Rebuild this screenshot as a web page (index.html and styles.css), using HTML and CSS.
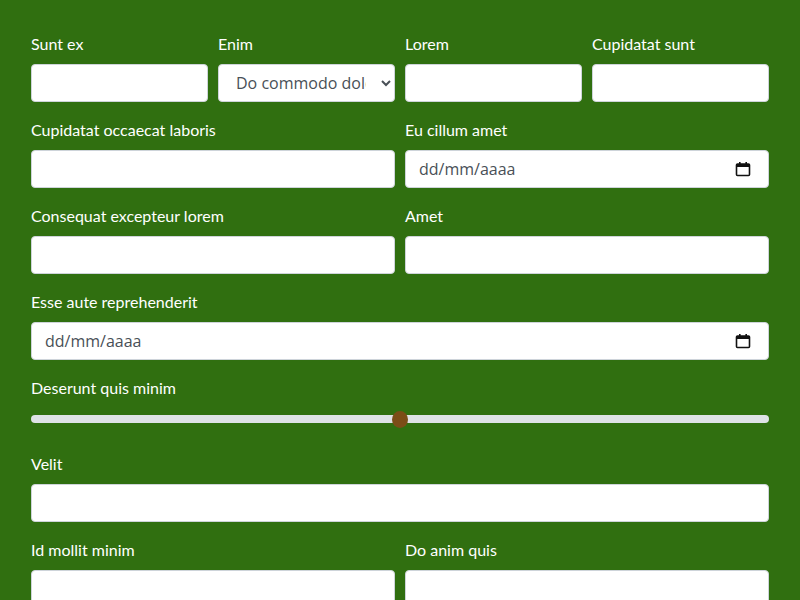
FILE: index.html
```
<!DOCTYPE html>
<html lang="es">
<head>
<meta charset="utf-8">
<link rel="stylesheet" href="styles.css">
</head>
<body>
<form class="form">
  <div class="row cols-4">
    <div class="field"><label class="lbl">Sunt ex</label><input class="control" type="text"></div>
    <div class="field"><label class="lbl">Enim</label>
      <select class="control select"><option>Do commodo dolor sint</option></select></div>
    <div class="field"><label class="lbl">Lorem</label><input class="control" type="text"></div>
    <div class="field"><label class="lbl">Cupidatat sunt</label><input class="control" type="text"></div>
  </div>
  <div class="row cols-2">
    <div class="field"><label class="lbl">Cupidatat occaecat laboris</label><input class="control" type="text"></div>
    <div class="field"><label class="lbl">Eu cillum amet</label>
      <div class="control date"><span class="date-text">dd/mm/aaaa</span>
        <svg class="cal" width="16" height="16" viewBox="0 0 16 16"><rect x="1.5" y="3" width="13" height="11.5" rx="1" fill="none" stroke="#111" stroke-width="1.6"/><rect x="1.5" y="3" width="13" height="3" fill="#111"/><rect x="4" y="1" width="1.6" height="3" fill="#111"/><rect x="10.4" y="1" width="1.6" height="3" fill="#111"/></svg>
      </div></div>
  </div>
  <div class="row cols-2">
    <div class="field"><label class="lbl">Consequat excepteur lorem</label><input class="control" type="text"></div>
    <div class="field"><label class="lbl">Amet</label><input class="control" type="text"></div>
  </div>
  <div class="row">
    <div class="field"><label class="lbl">Esse aute reprehenderit</label>
      <div class="control date"><span class="date-text">dd/mm/aaaa</span>
        <svg class="cal" width="16" height="16" viewBox="0 0 16 16"><rect x="1.5" y="3" width="13" height="11.5" rx="1" fill="none" stroke="#111" stroke-width="1.6"/><rect x="1.5" y="3" width="13" height="3" fill="#111"/><rect x="4" y="1" width="1.6" height="3" fill="#111"/><rect x="10.4" y="1" width="1.6" height="3" fill="#111"/></svg>
      </div></div>
  </div>
  <div class="row">
    <div class="field"><label class="lbl">Deserunt quis minim</label>
      <input class="range" type="range" min="0" max="100" value="50"></div>
  </div>
  <div class="row">
    <div class="field"><label class="lbl">Velit</label><input class="control" type="text"></div>
  </div>
  <div class="row cols-2">
    <div class="field"><label class="lbl">Id mollit minim</label><input class="control" type="text"></div>
    <div class="field"><label class="lbl">Do anim quis</label><input class="control" type="text"></div>
  </div>
</form>
</body>
</html>
```
FILE: styles.css
```
html, body {
  margin: 0;
  padding: 0;
  background: #306f10;
}
body {
  font-family: "Lato", "Open Sans", sans-serif;
}
.form {
  padding: 32px 31px;
  display: flex;
  flex-direction: column;
  gap: 16px;
}
.row {
  display: grid;
  grid-template-columns: 1fr;
  gap: 10px;
}
.row.cols-4 { grid-template-columns: repeat(4, 1fr); }
.row.cols-2 { grid-template-columns: repeat(2, 1fr); }
.field {
  display: flex;
  flex-direction: column;
  min-width: 0;
}
.lbl {
  color: #ffffff;
  font-size: 16px;
  line-height: 24px;
  margin-bottom: 8px;
}
.control {
  box-sizing: border-box;
  height: 38px;
  width: 100%;
  background: #fff;
  border: 1px solid #ced4da;
  border-radius: 4px;
  padding: 0 12px;
  font-family: "Open Sans", sans-serif;
  font-size: 16px;
  color: #495057;
  margin: 0;
}
.select {
  padding-left: 13px;
}
.date {
  display: flex;
  align-items: center;
  justify-content: space-between;
  padding: 0 17px 0 13px;
}
.date-text { color: #495057; }
.cal { display: block; }
.range {
  -webkit-appearance: none;
  appearance: none;
  width: 100%;
  height: 22px;
  margin: 0 0 6px 0;
  background: transparent;
}
.range::-webkit-slider-runnable-track {
  height: 8px;
  background: #dee2e6;
  border-radius: 4px;
}
.range::-webkit-slider-thumb {
  -webkit-appearance: none;
  width: 16px;
  height: 17px;
  border-radius: 50%;
  background: #7b4d17;
  margin-top: -4.5px;
  border: none;
}
```
